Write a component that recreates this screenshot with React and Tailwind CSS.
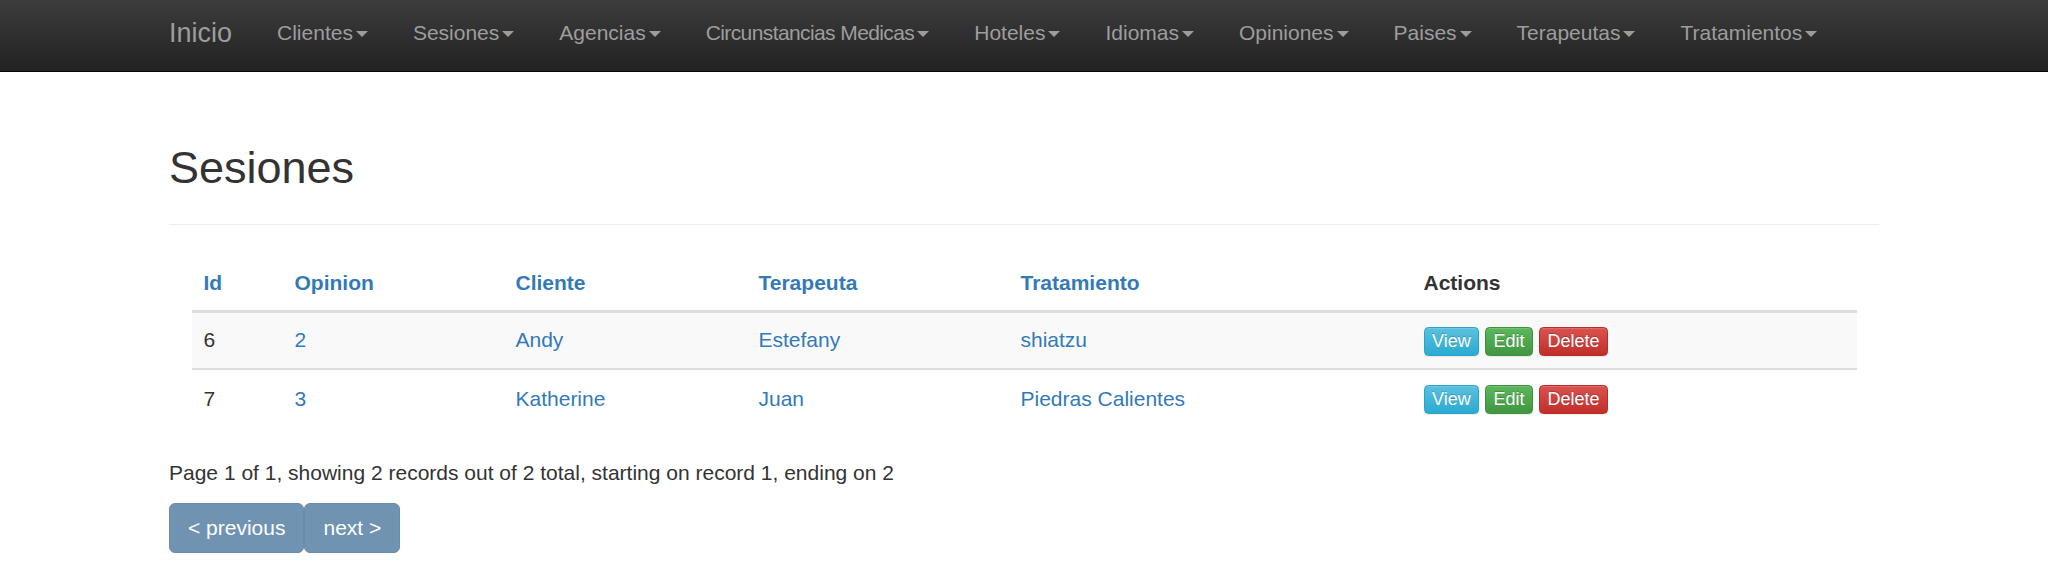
const NAV_ITEMS = [
  'Clientes',
  'Sesiones',
  'Agencias',
  'Circunstancias Medicas',
  'Hoteles',
  'Idiomas',
  'Opiniones',
  'Paises',
  'Terapeutas',
  'Tratamientos',
];

const ROWS = [
  { id: 6, opinion: '2', cliente: 'Andy', terapeuta: 'Estefany', tratamiento: 'shiatzu' },
  { id: 7, opinion: '3', cliente: 'Katherine', terapeuta: 'Juan', tratamiento: 'Piedras Calientes' },
];

function Caret() {
  return (
    <span className="ml-[3px] inline-block h-0 w-0 align-middle border-t-[6px] border-x-[6px] border-t-[#9d9d9d] border-x-transparent" />
  );
}

function SmallBtn({ children, className }) {
  return (
    <a
      className={`inline-block align-middle px-[7.5px] text-[18px] leading-[27px] text-white rounded-[4.5px] border-[1.5px] shadow-[inset_0_1px_0_rgba(255,255,255,.15),0_1px_1px_rgba(0,0,0,.075)] [text-shadow:0_-1px_0_rgba(0,0,0,.2)] cursor-pointer ${className}`}
    >
      {children}
    </a>
  );
}

export default function App() {
  return (
    <div className="min-h-[586px] bg-white text-[21px] leading-[30px] text-[#333] font-['Liberation_Sans',Arial,sans-serif]">
      <div className="h-[71.5px] border-b-[1.5px] border-[#080808] bg-[linear-gradient(to_bottom,#3c3c3c,#222)]">
        <div className="w-[1755px] mx-auto px-[22.5px] pt-[17.5px] flex">
          <a className="text-[27px] leading-[30px] text-[#9d9d9d] pr-[22.5px]">Inicio</a>
          {NAV_ITEMS.map((item) => (
            <a
              key={item}
              className={`px-[22.5px] text-[#9d9d9d] whitespace-nowrap ${item === 'Circunstancias Medicas' ? 'tracking-[-0.6px]' : ''}`}
            >
              {item}
              <Caret />
            </a>
          ))}
        </div>
      </div>

      <div className="w-[1755px] mx-auto px-[22.5px]">
        <h2 className="mt-[71.5px] text-[45px] leading-[49.5px] font-normal">Sesiones</h2>
        <hr className="mt-[31px] border-0 border-t-[1.5px] border-[#eee]" />

        <div className="px-[22.5px] mt-[31px]">
          <table className="w-full table-fixed border-collapse">
            <thead>
              <tr className="text-left">
                <th className="w-[91px] p-[12px] font-bold text-[#337ab7] border-b-[3px] border-[#ddd]">Id</th>
                <th className="w-[221px] p-[12px] font-bold text-[#337ab7] border-b-[3px] border-[#ddd]">Opinion</th>
                <th className="w-[243px] p-[12px] font-bold text-[#337ab7] border-b-[3px] border-[#ddd]">Cliente</th>
                <th className="w-[262px] p-[12px] font-bold text-[#337ab7] border-b-[3px] border-[#ddd]">Terapeuta</th>
                <th className="w-[403px] p-[12px] font-bold text-[#337ab7] border-b-[3px] border-[#ddd]">Tratamiento</th>
                <th className="p-[12px] font-bold border-b-[3px] border-[#ddd]">Actions</th>
              </tr>
            </thead>
            <tbody>
              {ROWS.map((r, i) => (
                <tr key={r.id} className={i === 0 ? 'bg-[#f9f9f9]' : 'border-t-2 border-[#ddd]'}>
                  <td className="h-[58px] p-[12px]">{r.id}</td>
                  <td className="p-[12px] text-[#337ab7]">{r.opinion}</td>
                  <td className="p-[12px] text-[#337ab7]">{r.cliente}</td>
                  <td className="p-[12px] text-[#337ab7]">{r.terapeuta}</td>
                  <td className="p-[12px] text-[#337ab7]">{r.tratamiento}</td>
                  <td className="p-[12px] whitespace-nowrap">
                    <SmallBtn className="bg-[linear-gradient(to_bottom,#5bc0de,#2aabd2)] border-[#28a4c9]">View</SmallBtn>{' '}
                    <SmallBtn className="bg-[linear-gradient(to_bottom,#5cb85c,#419641)] border-[#3e8f3e]">Edit</SmallBtn>{' '}
                    <SmallBtn className="bg-[linear-gradient(to_bottom,#d9534f,#c12e2a)] border-[#b92c28]">Delete</SmallBtn>
                  </td>
                </tr>
              ))}
            </tbody>
          </table>
        </div>

        <p className="mt-[31px]">Page 1 of 1, showing 2 records out of 2 total, starting on record 1, ending on 2</p>
        <div className="mt-[15px] flex">
          <a className="h-[50px] px-[18px] flex items-center text-white bg-[#7093b1] border-[1.5px] border-[#6a8dab] rounded-[6px]">&lt; previous</a>
          <a className="h-[50px] px-[18px] flex items-center text-white bg-[#7093b1] border-[1.5px] border-[#6a8dab] rounded-[6px]">next &gt;</a>
        </div>
      </div>
    </div>
  );
}
